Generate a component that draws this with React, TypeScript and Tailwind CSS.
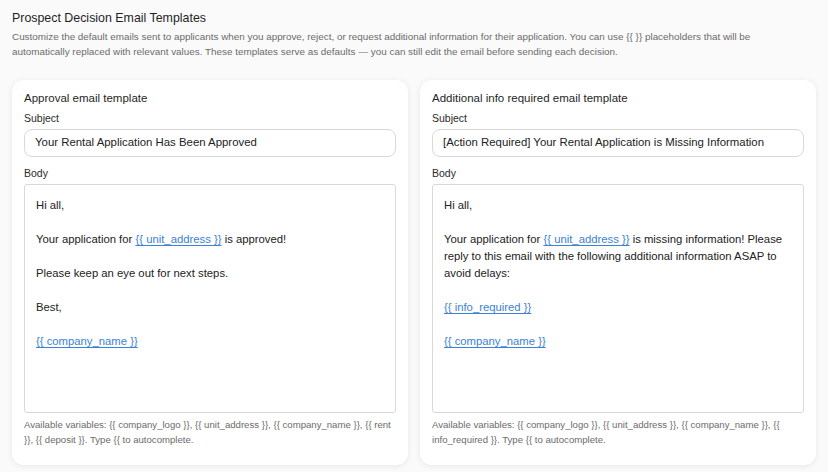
import React from 'react';

const font = { fontFamily: '"Liberation Sans", Arial, sans-serif' };

function Var({ name }: { name: string }) {
  return <span className="text-[#3b82d6] underline underline-offset-2">{`{{ ${name} }}`}</span>;
}

function TemplateCard({
  title,
  subject,
  body,
  help,
}: {
  title: string;
  subject: string;
  body: React.ReactNode;
  help: string;
}) {
  return (
    <section className="flex-1 bg-white rounded-xl shadow-[0_1px_6px_rgba(0,0,0,0.08)] px-3 pt-[10px] pb-[18px] flex flex-col">
      <h3 className="text-[11.5px] leading-[16px] text-[#1f1f1f]">{title}</h3>
      <label className="mt-[5px] text-[10.5px] leading-[14px] font-medium text-[#2a2a2a]">Subject</label>
      <div className="mt-[4px] h-[28px] border border-[#d9d9d9] rounded-lg px-[10px] flex items-center text-[11.4px] text-[#222]">
        {subject}
      </div>
      <label className="mt-[9px] text-[10.5px] leading-[14px] font-medium text-[#2a2a2a]">Body</label>
      <div className="mt-[4px] h-[229px] border border-[#d9d9d9] rounded-[3px] px-[11px] pt-[12px] text-[11.3px] leading-[17px] text-[#222]">
        {body}
      </div>
      <p className="mt-[4px] text-[9.6px] leading-[15px] text-[#6b6b6b]">{help}</p>
    </section>
  );
}

export default function App() {
  return (
    <div className="w-[828px] h-[472px] overflow-hidden bg-[#fafafa] px-3 pt-[9px]" style={font}>
      <h1 className="text-[12.4px] leading-[18px] text-[#1f1f1f]">Prospect Decision Email Templates</h1>
      <p className="mt-[2px] text-[9.9px] leading-[15px] text-[#6b6b6b] max-w-[760px]">
        Customize the default emails sent to applicants when you approve, reject, or request additional information for their application. You can use {'{{ }}'} placeholders that will be automatically replaced with relevant values. These templates serve as defaults — you can still edit the email before sending each decision.
      </p>

      <div className="mt-[21px] flex gap-3">
        <TemplateCard
          title="Approval email template"
          subject="Your Rental Application Has Been Approved"
          body={
            <>
              <p>Hi all,</p>
              <p>&nbsp;</p>
              <p>
                Your application for <Var name="unit_address" /> is approved!
              </p>
              <p>&nbsp;</p>
              <p>Please keep an eye out for next steps.</p>
              <p>&nbsp;</p>
              <p>Best,</p>
              <p>&nbsp;</p>
              <p>
                <Var name="company_name" />
              </p>
            </>
          }
          help="Available variables: {{ company_logo }}, {{ unit_address }}, {{ company_name }}, {{ rent }}, {{ deposit }}. Type {{ to autocomplete."
        />
        <TemplateCard
          title="Additional info required email template"
          subject="[Action Required] Your Rental Application is Missing Information"
          body={
            <>
              <p>Hi all,</p>
              <p>&nbsp;</p>
              <p>
                Your application for <Var name="unit_address" /> is missing information! Please reply to this email with the following additional information ASAP to avoid delays:
              </p>
              <p>&nbsp;</p>
              <p>
                <Var name="info_required" />
              </p>
              <p>&nbsp;</p>
              <p>
                <Var name="company_name" />
              </p>
            </>
          }
          help="Available variables: {{ company_logo }}, {{ unit_address }}, {{ company_name }}, {{ info_required }}. Type {{ to autocomplete."
        />
      </div>
    </div>
  );
}
